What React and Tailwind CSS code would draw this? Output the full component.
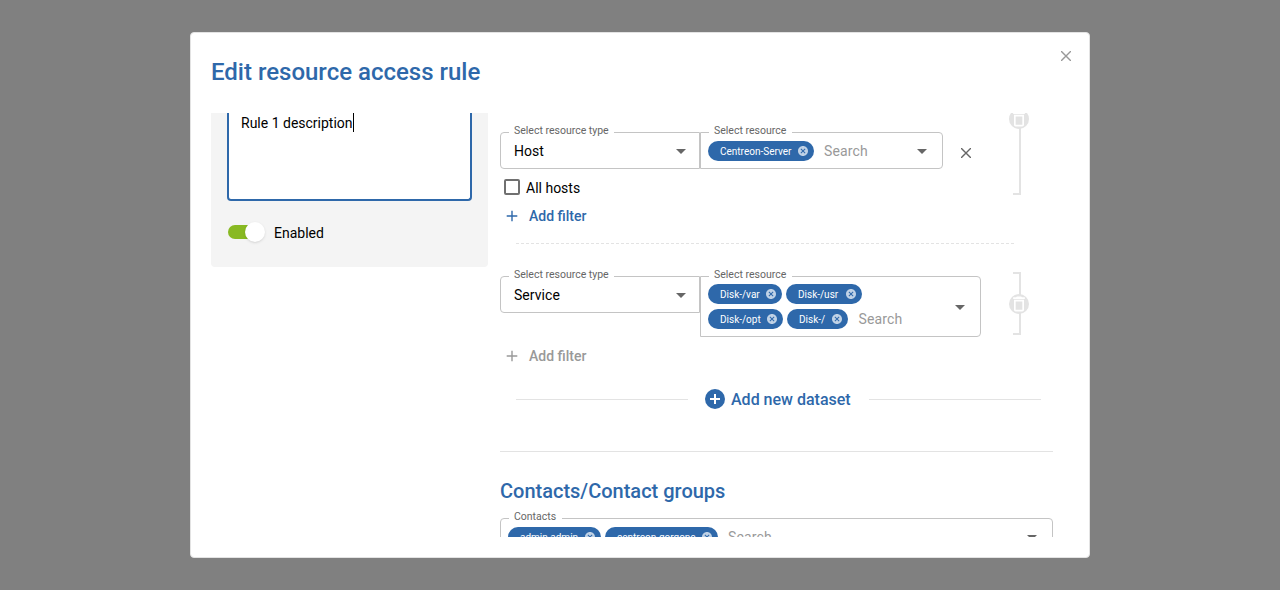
import React from "react";

function Label({ children, className }) {
  return (
    <span className={`absolute -top-[9px] left-[8px] z-10 h-[14px] bg-white pl-[5px] text-[10.5px] leading-[14px] text-[#666] whitespace-nowrap ${className}`}>
      {children}
    </span>
  );
}

function Caret({ className = "mt-px" }) {
  return (
    <svg className={`h-[5px] w-[10px] shrink-0 ${className}`} viewBox="0 0 10 5" fill="#666">
      <path d="M0 0h10L5 5z" />
    </svg>
  );
}

function Chip({ text, className }) {
  return (
    <span className={`flex h-[20px] shrink-0 items-center justify-between rounded-full bg-[#2e68aa] pl-[12px] pr-[5px] text-[10px] leading-[12px] text-white ${className}`}>
      <span className="pt-px whitespace-nowrap">{text}</span>
      <svg className="h-[12px] w-[12px] shrink-0" viewBox="0 0 24 24" fill="#c0d2e6">
        <path d="M12 2C6.47 2 2 6.47 2 12s4.47 10 10 10 10-4.47 10-10S17.53 2 12 2zm5 13.59L15.59 17 12 13.41 8.41 17 7 15.59 10.59 12 7 8.41 8.41 7 12 10.59 15.59 7 17 8.41 13.41 12 17 15.59z" />
      </svg>
    </span>
  );
}

function Search({ className }) {
  return <span className={`text-[14px] leading-[20px] tracking-[0.13px] text-[#999] ${className}`}>Search</span>;
}

function TypeSelect({ value }) {
  return (
    <div className="relative flex h-[37px] w-[200px] items-center justify-between rounded-l-[4px] border border-[#c4c4c4] pt-px pl-[13px] pr-[13px] text-[14px]">
      <Label className="w-[105px]">Select resource type</Label>
      <span className="tracking-[0.05px]">{value}</span>
      <Caret />
    </div>
  );
}

function Plus() {
  return (
    <svg className="h-[12px] w-[12px]" viewBox="0 0 12 12" fill="none" stroke="currentColor" strokeWidth="1.4">
      <path d="M6 .7v10.6M.7 6h10.6" />
    </svg>
  );
}

function AddFilter({ className }) {
  return (
    <div className={`flex h-[20px] items-center gap-[11px] pl-[6px] text-[14px] font-medium ${className}`}>
      <Plus />
      <span>Add filter</span>
    </div>
  );
}

function Bracket({ className }) {
  return (
    <div className={`relative w-[8px] border-2 border-l-0 border-[#e3e3e3] ${className}`}>
      <span className="absolute -left-[4px] flex h-[20px] w-[20px] items-center justify-center rounded-full bg-[#e3e3e3] top-[calc(50%-10px)]">
        <svg className="h-[20px] w-[20px]" viewBox="0 0 24 24" fill="#fff">
          <path d="M6 19c0 1.1.9 2 2 2h8c1.1 0 2-.9 2-2V7H6v12zM8 9h8v10H8V9zm7.5-5l-1-1h-5l-1 1H5v2h14V4h-3.5z" />
        </svg>
      </span>
    </div>
  );
}

export default function App() {
  return (
    <div className="flex h-[590px] w-[1280px] items-start justify-center bg-[#808080] pt-[32px] font-['Roboto',sans-serif] text-black">
      <div className="flex h-[526px] w-[900px] flex-col rounded-[4px] border border-[#e3e3e3] bg-white px-[20px]">
        <header className="flex h-[80px] shrink-0 justify-between">
          <h1 className="pt-[23px] text-[24px] leading-[32px] font-medium text-[#2e68aa]">Edit resource access rule</h1>
          <svg className="mt-[18px] mr-[-2px] h-[10px] w-[10px]" viewBox="0 0 10 10" fill="none" stroke="#999" strokeWidth="1.4">
            <path d="M0 0l10 10M10 0L0 10" />
          </svg>
        </header>

        <main className="flex h-[424px] shrink-0 items-start gap-[12px] overflow-hidden">
          <aside className="h-[154px] w-[277px] shrink-0 rounded-b-[4px] bg-[#f4f4f4] px-[16px]">
            <div className="flex h-[88px] w-[245px] items-start rounded-b-[4px] border-2 border-t-0 border-[#2e68aa] bg-white pl-[12px]">
              <span className="text-[14px] leading-[20px]">Rule 1 description</span>
              <span className="h-[19px] w-px bg-black" />
            </div>
            <div className="mt-[21px] flex h-[20px] items-center pl-px">
              <span className="flex h-[14px] w-[34px] items-center rounded-full bg-[#88b922] pl-[17px]">
                <span className="h-[20px] w-[20px] shrink-0 rounded-full bg-white shadow" />
              </span>
              <span className="ml-[12px] pt-[2px] text-[14px]">Enabled</span>
            </div>
          </aside>

          <section className="w-[553px] shrink-0">
            <div className="flex h-[130px] items-start">
              <div className="flex w-[513px] flex-col pt-[19px]">
                <div className="flex items-start">
                  <TypeSelect value="Host" />
                  <div className="relative flex h-[37px] w-[243px] items-center rounded-r-[4px] border border-[#c4c4c4] pt-px pl-[7px] pr-[15px]">
                    <Label className="w-[83px]">Select resource</Label>
                    <Chip text="Centreon-Server" className="w-[106px]" />
                    <Search className="ml-[10px] flex-1" />
                    <Caret />
                  </div>
                  <svg className="mt-[16px] ml-[18px] h-[10px] w-[10px]" viewBox="0 0 10 10" fill="none" stroke="#666" strokeWidth="1.4">
                    <path d="M0 0l10 10M10 0L0 10" />
                  </svg>
                </div>
                <div className="mt-[9px] flex h-[20px] items-center gap-[6px] pl-[4px] text-[14px]">
                  <span className="mb-[2px] h-[16px] w-[16px] rounded-[2px] border-2 border-[#707070]" />
                  <span>All hosts</span>
                </div>
                <AddFilter className="mt-[8px] text-[#2e68aa]" />
              </div>
              <Bracket className="-mt-[70px] h-[152px]" />
            </div>
            <svg className="ml-[16px] block h-px w-[499px]" viewBox="0 0 499 1">
              <path d="M0 .5h499" stroke="#e3e3e3" strokeDasharray="3 2" />
            </svg>

            <div className="mt-[28px] flex h-[94px] items-start">
              <div className="flex w-[513px] flex-col pt-[4px]">
                <div className="flex items-start">
                  <TypeSelect value="Service" />
                  <div className="relative flex h-[61px] w-[281px] items-center justify-between rounded-r-[4px] border border-[#c4c4c4] pl-[7px] pr-[15px]">
                    <Label className="w-[83px]">Select resource</Label>
                    <div className="flex flex-col gap-[5px]">
                      <div className="flex gap-[4px]">
                        <Chip text="Disk-/var" className="w-[74px]" />
                        <Chip text="Disk-/usr" className="w-[76px]" />
                      </div>
                      <div className="flex gap-[4px]">
                        <Chip text="Disk-/opt" className="w-[75px]" />
                        <Chip text="Disk-/" className="w-[61px]" />
                        <Search className="ml-[6.5px]" />
                      </div>
                    </div>
                    <Caret className="mt-[2px]" />
                  </div>
                </div>
                <AddFilter className="mt-[9px] text-[#999]" />
              </div>
              <Bracket className="h-[63px]" />
            </div>

            <div className="mt-[21px] flex h-[24px] items-center pl-[16px]">
              <span className="h-px w-[172px] bg-[#e3e3e3]" />
              <div className="ml-[17px] flex w-[164px] items-center gap-[6px] text-[#2e68aa]">
                <span className="flex h-[20px] w-[20px] items-center justify-center rounded-full bg-[#2e68aa]">
                  <svg className="h-[10px] w-[10px]" viewBox="0 0 10 10" stroke="#fff" strokeWidth="2">
                    <path d="M5 0v10M0 5h10" />
                  </svg>
                </span>
                <span className="pt-[2px] text-[16px] leading-[22px] font-medium whitespace-nowrap">Add new dataset</span>
              </div>
              <span className="h-px w-[172px] bg-[#e3e3e3]" />
            </div>

            <div className="mt-[40px] h-px bg-[#e3e3e3]" />
            <h2 className="mt-[24px] text-[20px] leading-[30px] font-medium text-[#2e68aa]">Contacts/Contact groups</h2>
            <div className="relative mt-[12px] flex h-[37px] items-center rounded-[4px] border border-[#c4c4c4] pt-px pl-[7px] pr-[15px]">
              <Label className="w-[53px]">Contacts</Label>
              <Chip text="admin admin" className="w-[93px]" />
              <Chip text="centreon-gorgone" className="ml-[4px] w-[113px]" />
              <Search className="ml-[10px] flex-1" />
              <Caret />
            </div>
          </section>
        </main>
      </div>
    </div>
  );
}
